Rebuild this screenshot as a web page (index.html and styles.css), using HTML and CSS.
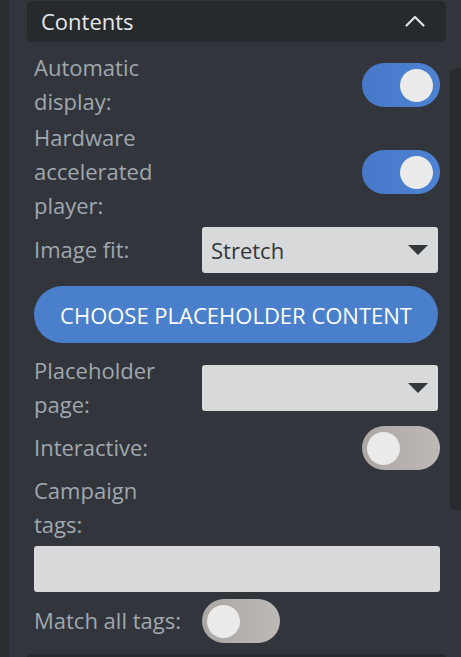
FILE: index.html
```html
<!DOCTYPE html>
<html lang="en">
<head>
<meta charset="utf-8">
<title>Contents</title>
<link rel="stylesheet" href="styles.css">
</head>
<body>
<div class="app">
  <div class="rail"></div>
  <div class="main">
    <section class="section">
      <header class="section-head">
        <span class="section-title">Contents</span>
        <svg class="chevron" width="20" height="12" viewBox="0 0 20 12"><path d="M1.5 10.5 L10 2 L18.5 10.5" fill="none" stroke="#e2e3e4" stroke-width="2.2" stroke-linecap="round" stroke-linejoin="round"/></svg>
      </header>
      <div class="section-body">
        <div class="row r1">
          <span class="lbl">Automatic<br>display:</span>
          <div class="ctl end"><span class="toggle on"><span class="knob"></span></span></div>
        </div>
        <div class="row r2">
          <span class="lbl">Hardware<br>accelerated<br>player:</span>
          <div class="ctl end"><span class="toggle on"><span class="knob"></span></span></div>
        </div>
        <div class="row r3">
          <span class="lbl">Image fit:</span>
          <div class="ctl"><div class="select"><span class="select-val">Stretch</span><span class="caret"></span></div></div>
        </div>
        <button class="btn">CHOOSE PLACEHOLDER CONTENT</button>
        <div class="row r4">
          <span class="lbl">Placeholder<br>page:</span>
          <div class="ctl"><div class="select"><span class="select-val"></span><span class="caret"></span></div></div>
        </div>
        <div class="row r5">
          <span class="lbl">Interactive:</span>
          <div class="ctl end"><span class="toggle off"><span class="knob"></span></span></div>
        </div>
        <div class="stack">
          <span class="lbl">Campaign<br>tags:</span>
          <div class="text-input"></div>
        </div>
        <div class="row r6">
          <span class="lbl">Match all tags:</span>
          <div class="ctl"><span class="toggle off"><span class="knob"></span></span></div>
        </div>
      </div>
    </section>
    <div class="next-head"></div>
  </div>
  <div class="scroll-track"><div class="scroll-thumb"></div></div>
</div>
</body>
</html>
```
FILE: styles.css
```css
html, body {
  margin: 0;
  padding: 0;
  height: 100%;
  background: #32363c;
  overflow: hidden;
}
body {
  font-family: "Open Sans", "Noto Sans", sans-serif;
  font-size: 22px;
}
.app {
  display: flex;
  height: 657px;
}
.rail {
  width: 9px;
  flex: none;
  background: #2a2d31;
}
.main {
  width: 441px;
  flex: none;
  display: flex;
  flex-direction: column;
}
.section-head {
  margin: 1px 4px 0 18px;
  height: 41px;
  background: #272a2d;
  border-radius: 5px;
  display: flex;
  align-items: center;
  justify-content: space-between;
  padding: 0 21px 1px 14px;
  box-sizing: border-box;
}
.section-title {
  color: #e6e7e8;
  font-size: 22px;
}
.chevron {
  display: block;
}
.section-body {
  padding: 9px 10px 0 25px;
  display: flex;
  flex-direction: column;
}
.row {
  display: grid;
  grid-template-columns: 168px 1fr;
  align-items: center;
}
.lbl {
  color: #a0a7ae;
  line-height: 34px;
  font-size: 22px;
  position: relative;
  top: -1px;
}
.ctl {
  display: flex;
}
.ctl.end {
  justify-content: flex-end;
}
.r2 { margin-top: 2px; }
.r3 { margin-top: 2px; height: 50px; }
.r4 { margin-top: 11px; }
.r5 { margin-top: 2px; padding: 2px 0; }
.r6 { margin-top: 7px; }
.toggle {
  position: relative;
  width: 78px;
  height: 44px;
  border-radius: 22px;
  display: block;
}
.toggle.on {
  background: linear-gradient(to right, #4779c9, #4c82d1);
}
.toggle.off {
  background: linear-gradient(to right, #aba7a5, #bdb9b7);
}
.knob {
  position: absolute;
  top: 5.5px;
  width: 33px;
  height: 33px;
  border-radius: 50%;
  background: #ebebeb;
}
.on .knob { left: 38px; }
.off .knob { left: 5px; }
.select {
  width: 236px;
  height: 46px;
  background: #d8d9db;
  border-radius: 3px;
  display: flex;
  align-items: center;
  justify-content: space-between;
  padding: 0 10px 0 9px;
  box-sizing: border-box;
}
.select-val {
  color: #33363a;
  font-size: 22px;
}
.caret {
  width: 0;
  height: 0;
  border-left: 10px solid transparent;
  border-right: 10px solid transparent;
  border-top: 10px solid #33383d;
}
.btn {
  margin-top: 11px;
  width: 404px;
  height: 57px;
  border: none;
  border-radius: 29px;
  background: #4a7fcc;
  color: #ffffff;
  font-family: "Open Sans", "Noto Sans", sans-serif;
  font-size: 22px;
  padding: 0;
}
.stack {
  margin-top: 2px;
  display: flex;
  flex-direction: column;
}
.text-input {
  margin-top: 4px;
  height: 46px;
  background: #d8d9db;
  border-radius: 3px;
}
.next-head {
  margin: auto 4px 0 18px;
  height: 3px;
  background: #272a2d;
  border-radius: 5px 5px 0 0;
}
.scroll-track {
  flex: 1;
  padding-top: 68px;
}
.scroll-thumb {
  height: 442px;
  background: #282b2e;
  border-radius: 6px 0 0 6px;
}
```
